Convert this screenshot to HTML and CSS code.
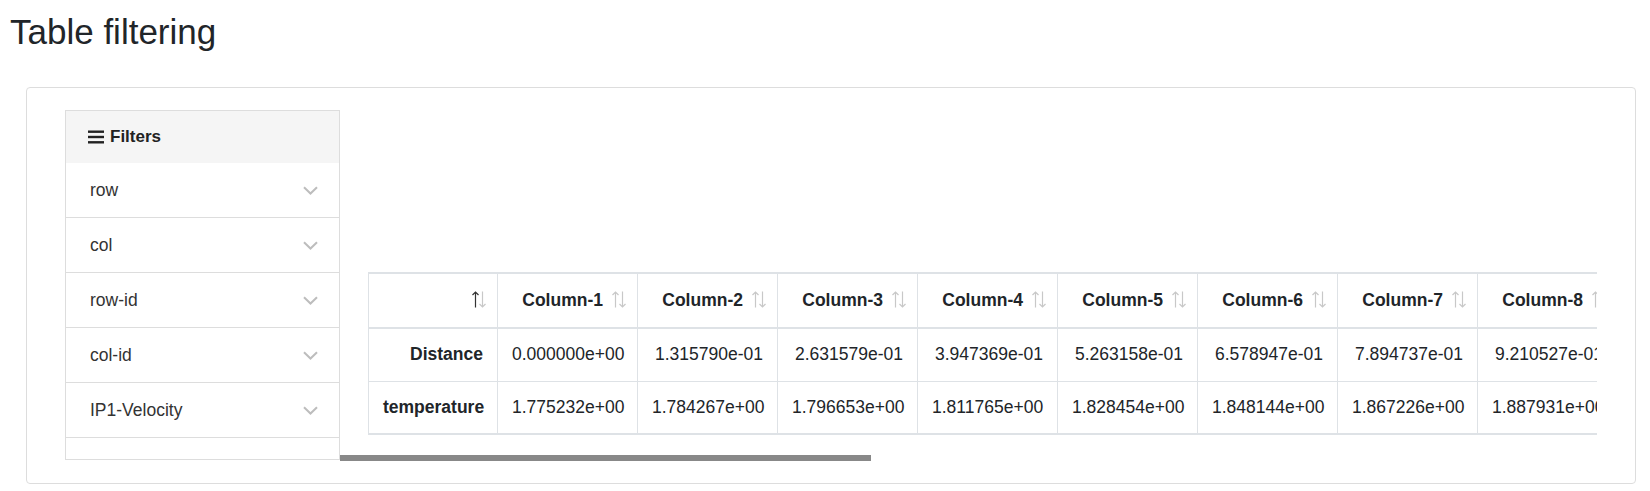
FILE: index.html
```html
<!DOCTYPE html>
<html lang="en">
<head>
<meta charset="utf-8">
<title>Table filtering</title>
<link rel="stylesheet" href="styles.css">
</head>
<body>
<div class="page">
  <h1 class="title">Table filtering</h1>
  <div class="card">
    <aside class="filters">
      <div class="filters-head">
        <svg class="burger" width="16" height="14" viewBox="0 0 16 14"><rect x="0" y="0.5" width="16" height="2.4"/><rect x="0" y="5.8" width="16" height="2.4"/><rect x="0" y="11.1" width="16" height="2.4"/></svg>
        <span>Filters</span>
      </div>
      <div class="filter-item"><span>row</span><svg class="chev" width="15" height="9" viewBox="0 0 15 9"><path d="M1 1.2 L7.5 7.5 L14 1.2"/></svg></div>
      <div class="filter-item"><span>col</span><svg class="chev" width="15" height="9" viewBox="0 0 15 9"><path d="M1 1.2 L7.5 7.5 L14 1.2"/></svg></div>
      <div class="filter-item"><span>row-id</span><svg class="chev" width="15" height="9" viewBox="0 0 15 9"><path d="M1 1.2 L7.5 7.5 L14 1.2"/></svg></div>
      <div class="filter-item"><span>col-id</span><svg class="chev" width="15" height="9" viewBox="0 0 15 9"><path d="M1 1.2 L7.5 7.5 L14 1.2"/></svg></div>
      <div class="filter-item"><span>IP1-Velocity</span><svg class="chev" width="15" height="9" viewBox="0 0 15 9"><path d="M1 1.2 L7.5 7.5 L14 1.2"/></svg></div>
      <div class="filter-rest"></div>
    </aside>
    <section class="results">
      <div class="table-clip">
        <table class="data">
          <thead>
            <tr>
              <th class="corner"><svg class="sort active" width="16" height="19" viewBox="0 0 16 19"><path class="up" d="M4.5 17.5 V2 M1.5 5 L4.5 2 L7.5 5"/><path class="down" d="M11.5 1.5 V17 M8.5 14 L11.5 17 L14.5 14"/></svg></th>
              <th>Column-1<svg class="sort" width="16" height="19" viewBox="0 0 16 19"><path d="M4.5 17.5 V2 M1.5 5 L4.5 2 L7.5 5"/><path d="M11.5 1.5 V17 M8.5 14 L11.5 17 L14.5 14"/></svg></th>
              <th>Column-2<svg class="sort" width="16" height="19" viewBox="0 0 16 19"><path d="M4.5 17.5 V2 M1.5 5 L4.5 2 L7.5 5"/><path d="M11.5 1.5 V17 M8.5 14 L11.5 17 L14.5 14"/></svg></th>
              <th>Column-3<svg class="sort" width="16" height="19" viewBox="0 0 16 19"><path d="M4.5 17.5 V2 M1.5 5 L4.5 2 L7.5 5"/><path d="M11.5 1.5 V17 M8.5 14 L11.5 17 L14.5 14"/></svg></th>
              <th>Column-4<svg class="sort" width="16" height="19" viewBox="0 0 16 19"><path d="M4.5 17.5 V2 M1.5 5 L4.5 2 L7.5 5"/><path d="M11.5 1.5 V17 M8.5 14 L11.5 17 L14.5 14"/></svg></th>
              <th>Column-5<svg class="sort" width="16" height="19" viewBox="0 0 16 19"><path d="M4.5 17.5 V2 M1.5 5 L4.5 2 L7.5 5"/><path d="M11.5 1.5 V17 M8.5 14 L11.5 17 L14.5 14"/></svg></th>
              <th>Column-6<svg class="sort" width="16" height="19" viewBox="0 0 16 19"><path d="M4.5 17.5 V2 M1.5 5 L4.5 2 L7.5 5"/><path d="M11.5 1.5 V17 M8.5 14 L11.5 17 L14.5 14"/></svg></th>
              <th>Column-7<svg class="sort" width="16" height="19" viewBox="0 0 16 19"><path d="M4.5 17.5 V2 M1.5 5 L4.5 2 L7.5 5"/><path d="M11.5 1.5 V17 M8.5 14 L11.5 17 L14.5 14"/></svg></th>
              <th>Column-8<svg class="sort" width="16" height="19" viewBox="0 0 16 19"><path d="M4.5 17.5 V2 M1.5 5 L4.5 2 L7.5 5"/><path d="M11.5 1.5 V17 M8.5 14 L11.5 17 L14.5 14"/></svg></th>
              <th>Column-9<svg class="sort" width="16" height="19" viewBox="0 0 16 19"><path d="M4.5 17.5 V2 M1.5 5 L4.5 2 L7.5 5"/><path d="M11.5 1.5 V17 M8.5 14 L11.5 17 L14.5 14"/></svg></th>
              <th>Column-10<svg class="sort" width="16" height="19" viewBox="0 0 16 19"><path d="M4.5 17.5 V2 M1.5 5 L4.5 2 L7.5 5"/><path d="M11.5 1.5 V17 M8.5 14 L11.5 17 L14.5 14"/></svg></th>
              <th>Column-11<svg class="sort" width="16" height="19" viewBox="0 0 16 19"><path d="M4.5 17.5 V2 M1.5 5 L4.5 2 L7.5 5"/><path d="M11.5 1.5 V17 M8.5 14 L11.5 17 L14.5 14"/></svg></th>
              <th>Column-12<svg class="sort" width="16" height="19" viewBox="0 0 16 19"><path d="M4.5 17.5 V2 M1.5 5 L4.5 2 L7.5 5"/><path d="M11.5 1.5 V17 M8.5 14 L11.5 17 L14.5 14"/></svg></th>
              <th>Column-13<svg class="sort" width="16" height="19" viewBox="0 0 16 19"><path d="M4.5 17.5 V2 M1.5 5 L4.5 2 L7.5 5"/><path d="M11.5 1.5 V17 M8.5 14 L11.5 17 L14.5 14"/></svg></th>
              <th>Column-14<svg class="sort" width="16" height="19" viewBox="0 0 16 19"><path d="M4.5 17.5 V2 M1.5 5 L4.5 2 L7.5 5"/><path d="M11.5 1.5 V17 M8.5 14 L11.5 17 L14.5 14"/></svg></th>
              <th>Column-15<svg class="sort" width="16" height="19" viewBox="0 0 16 19"><path d="M4.5 17.5 V2 M1.5 5 L4.5 2 L7.5 5"/><path d="M11.5 1.5 V17 M8.5 14 L11.5 17 L14.5 14"/></svg></th>
              <th>Column-16<svg class="sort" width="16" height="19" viewBox="0 0 16 19"><path d="M4.5 17.5 V2 M1.5 5 L4.5 2 L7.5 5"/><path d="M11.5 1.5 V17 M8.5 14 L11.5 17 L14.5 14"/></svg></th>
              <th>Column-17<svg class="sort" width="16" height="19" viewBox="0 0 16 19"><path d="M4.5 17.5 V2 M1.5 5 L4.5 2 L7.5 5"/><path d="M11.5 1.5 V17 M8.5 14 L11.5 17 L14.5 14"/></svg></th>
              <th>Column-18<svg class="sort" width="16" height="19" viewBox="0 0 16 19"><path d="M4.5 17.5 V2 M1.5 5 L4.5 2 L7.5 5"/><path d="M11.5 1.5 V17 M8.5 14 L11.5 17 L14.5 14"/></svg></th>
              <th>Column-19<svg class="sort" width="16" height="19" viewBox="0 0 16 19"><path d="M4.5 17.5 V2 M1.5 5 L4.5 2 L7.5 5"/><path d="M11.5 1.5 V17 M8.5 14 L11.5 17 L14.5 14"/></svg></th>
              <th>Column-20<svg class="sort" width="16" height="19" viewBox="0 0 16 19"><path d="M4.5 17.5 V2 M1.5 5 L4.5 2 L7.5 5"/><path d="M11.5 1.5 V17 M8.5 14 L11.5 17 L14.5 14"/></svg></th>
            </tr>
          </thead>
          <tbody>
            <tr>
              <th class="rowhead">Distance</th>
              <td>0.000000e+00</td><td>1.315790e-01</td><td>2.631579e-01</td><td>3.947369e-01</td><td>5.263158e-01</td><td>6.578947e-01</td><td>7.894737e-01</td><td>9.210527e-01</td><td>1.052632e+00</td><td>1.184211e+00</td><td>1.315790e+00</td><td>1.447369e+00</td><td>1.578948e+00</td><td>1.710527e+00</td><td>1.842106e+00</td><td>1.973685e+00</td><td>2.105264e+00</td><td>2.236843e+00</td><td>2.368422e+00</td><td>2.500000e+00</td>
            </tr>
            <tr>
              <th class="rowhead">temperature</th>
              <td>1.775232e+00</td><td>1.784267e+00</td><td>1.796653e+00</td><td>1.811765e+00</td><td>1.828454e+00</td><td>1.848144e+00</td><td>1.867226e+00</td><td>1.887931e+00</td><td>1.909024e+00</td><td>1.930512e+00</td><td>1.951876e+00</td><td>1.973311e+00</td><td>1.994587e+00</td><td>2.015702e+00</td><td>2.036418e+00</td><td>2.056934e+00</td><td>2.077115e+00</td><td>2.096981e+00</td><td>2.116372e+00</td><td>2.135410e+00</td>
            </tr>
          </tbody>
        </table>
      </div>
      <div class="scroll-track"><div class="scroll-thumb"></div></div>
    </section>
  </div>
</div>
</body>
</html>
```

FILE: styles.css
```css
html, body {
  margin: 0;
  padding: 0;
  background: #ffffff;
}

body {
  font-family: "Liberation Sans", Arial, sans-serif;
  color: #212529;
}

.page {
  padding: 11px 14px 0 10px;
}

.title {
  margin: 0;
  font-size: 35px;
  line-height: 41px;
  font-weight: normal;
  color: #212529;
}

.card {
  margin: 35px 0 0 16px;
  border: 1px solid #dddddd;
  border-radius: 4px;
  padding: 22px 38px 22px 38px;
  display: flex;
  align-items: flex-start;
}

/* Filters panel */
.filters {
  flex: 0 0 auto;
  width: 275px;
  box-sizing: border-box;
  border: 1px solid #dddddd;
  display: flex;
  flex-direction: column;
}

.filters-head {
  height: 52px;
  background: #f5f5f5;
  display: flex;
  align-items: center;
  padding-left: 22px;
  gap: 6px;
  font-size: 17px;
  font-weight: bold;
  color: #222222;
}

.burger {
  fill: #222222;
  display: block;
}

.filter-item {
  height: 54px;
  border-bottom: 1px solid #dddddd;
  display: flex;
  align-items: center;
  justify-content: space-between;
  padding: 0 21px 0 24px;
  font-size: 17.5px;
  color: #333333;
}

.chev {
  display: block;
  fill: none;
  stroke: #bdbdbd;
  stroke-width: 2;
}

.filter-rest {
  height: 21px;
}

/* Results */
.results {
  flex: 1 1 auto;
  min-width: 0;
  display: flex;
  flex-direction: column;
}

.table-clip {
  overflow: hidden;
  margin-top: 162px;
  padding-left: 28px;
}

.data {
  border-collapse: collapse;
  table-layout: fixed;
  width: 2789px;
  font-size: 17.5px;
  color: #212529;
  border-top: 2px solid #dee2e6;
  border-bottom: 2px solid #dee2e6;
  border-left: 1px solid #dee2e6;
}

.data th,
.data td {
  width: 140px;
  height: 53px;
  box-sizing: border-box;
  padding: 0 14px;
  text-align: right;
  white-space: nowrap;
  line-height: 25px;
  border-right: 1px solid #dee2e6;
  border-bottom: 1px solid #dee2e6;
}

.data th.corner,
.data th.rowhead {
  width: 129px;
}

.data thead th {
  font-weight: bold;
  padding-right: 10px;
  border-bottom: 2px solid #dee2e6;
  height: 55px;
}

.data tbody th {
  font-weight: bold;
}

.data tbody tr:last-child th,
.data tbody tr:last-child td {
  border-bottom: 0;
}

.sort {
  display: inline-block;
  vertical-align: -3px;
  margin-left: 8px;
  fill: none;
  stroke: #c8c8c8;
  stroke-width: 1.2;
}

.sort.active {
  margin-left: 0;
}

.sort.active .up {
  stroke: #333333;
}

/* Fake horizontal scrollbar */
.scroll-track {
  margin-top: 20px;
  height: 6px;
}

.scroll-thumb {
  width: 531px;
  height: 6px;
  background: #888888;
}
```
